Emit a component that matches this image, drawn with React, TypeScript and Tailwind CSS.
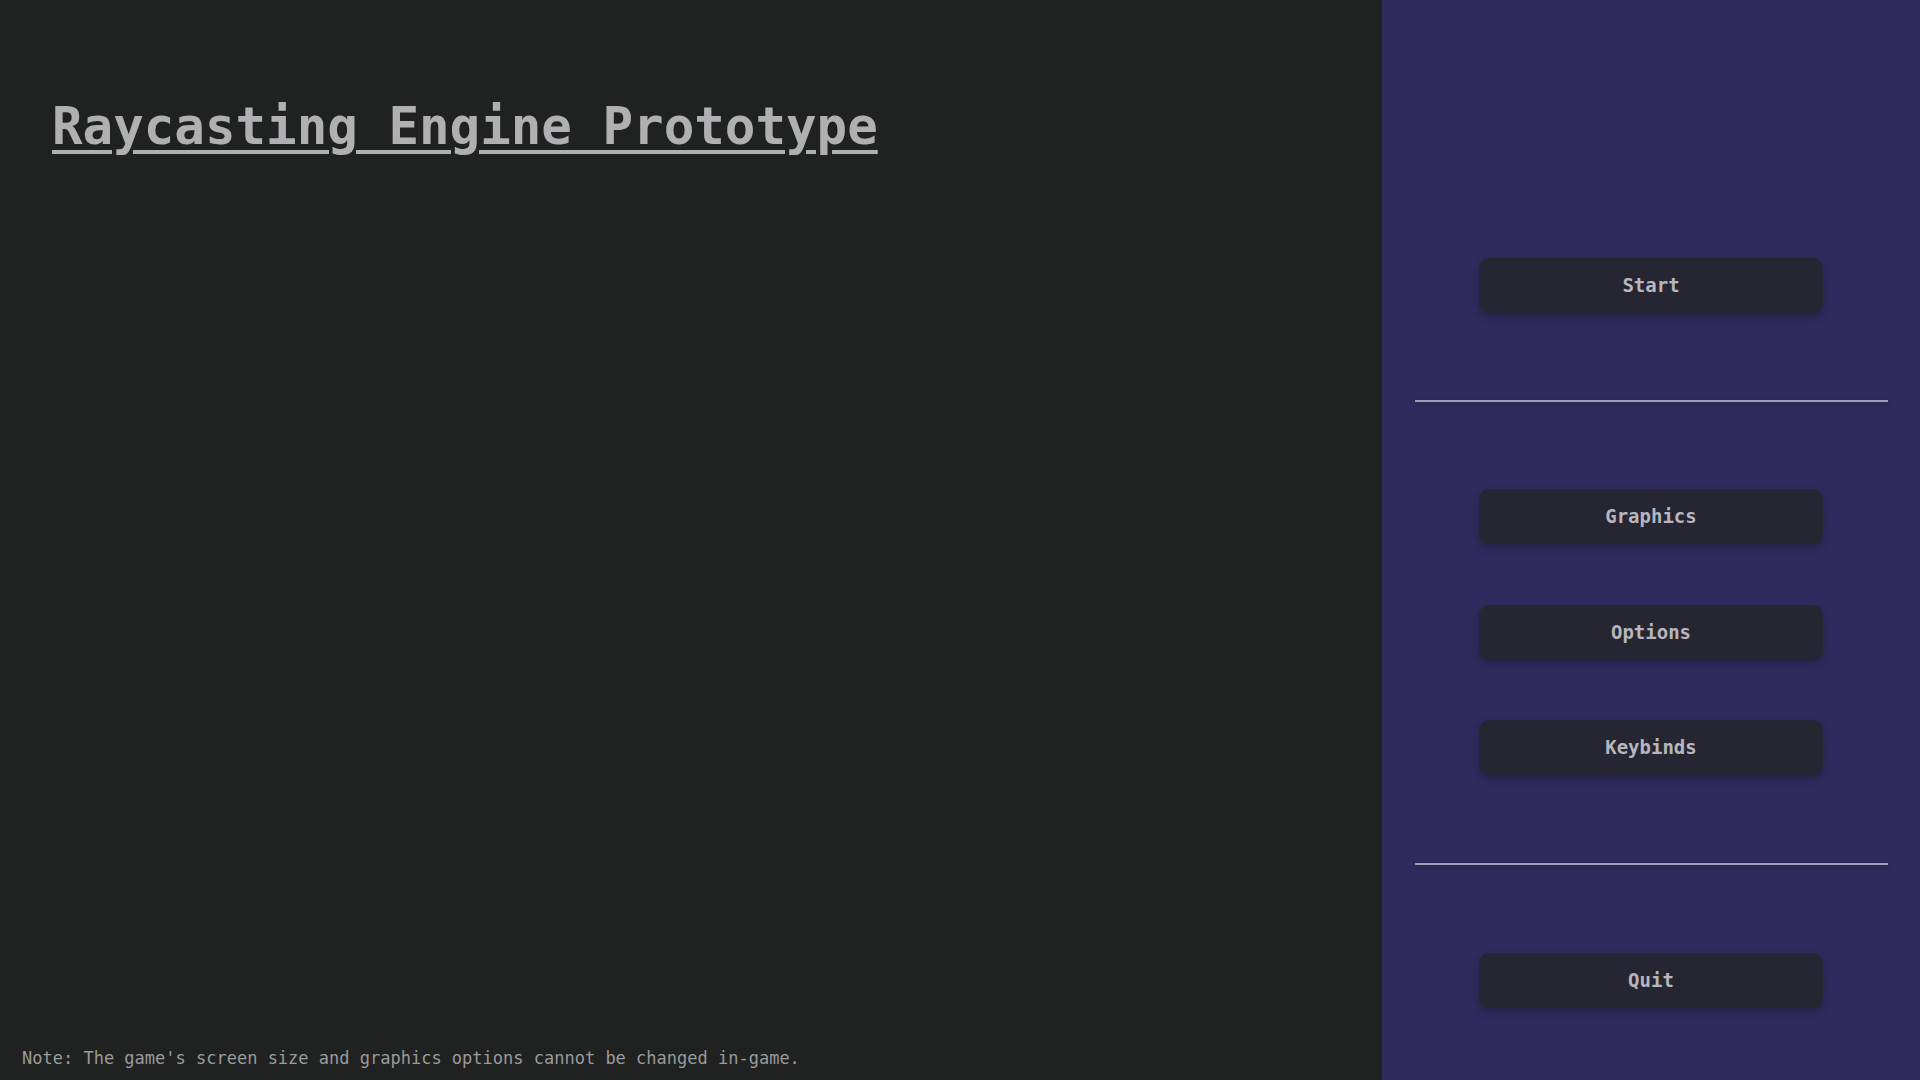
import * as React from "react"

const mono = "font-['DejaVu_Sans_Mono','Liberation_Mono',monospace]"

function MenuButton({ label, className = "" }: { label: string; className?: string }) {
  return (
    <button
      className={`flex h-[55px] w-[344px] items-center justify-center rounded-[10px] bg-[#262633] text-[19px] font-bold text-[#b6b6bc] shadow-[0_4px_8px_rgba(0,0,0,0.25)] ${mono} ${className}`}
    >
      {label}
    </button>
  )
}

function Divider({ className = "" }: { className?: string }) {
  return <div className={`h-[2px] w-[473px] bg-[#a29eb4] shadow-[0_2px_4px_rgba(0,0,0,0.25)] ${className}`} />
}

export default function App() {
  return (
    <div className={`flex h-[1080px] w-[1920px] overflow-hidden ${mono}`}>
      {/* main area */}
      <div className="flex w-[1382px] flex-col justify-between bg-[#202222]">
        <h1 className="pl-[52px] pt-[102px] text-[50.8px] leading-[50px] font-bold text-[#b0b0b2] underline decoration-[4px] underline-offset-[6px]">
          Raycasting Engine Prototype
        </h1>
        <p className="pb-[13px] pl-[22px] text-[17px] leading-[17px] text-[#9a9a9a]">
          Note: The game's screen size and graphics options cannot be changed in-game.
        </p>
      </div>

      {/* menu */}
      <div className="flex flex-1 flex-col items-center bg-[#302b5e] pt-[258px]">
        <MenuButton label="Start" />
        <Divider className="mt-[87px]" />
        <MenuButton label="Graphics" className="mt-[87px]" />
        <MenuButton label="Options" className="mt-[61px]" />
        <MenuButton label="Keybinds" className="mt-[60px]" />
        <Divider className="mt-[88px]" />
        <MenuButton label="Quit" className="mt-[88px]" />
      </div>
    </div>
  )
}
